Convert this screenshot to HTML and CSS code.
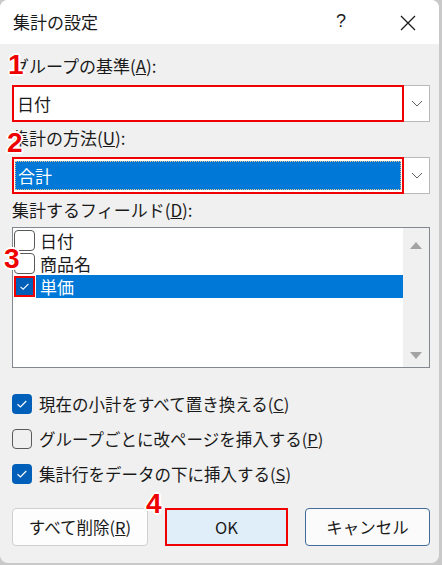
FILE: index.html
```html
<!DOCTYPE html>
<html lang="ja">
<head>
    <meta charset="UTF-8">
    <meta name="viewport" content="width=device-width, initial-scale=1.0">
    <title>集計の設定</title>
    <link rel="stylesheet" href="styles.css">
</head>
<body>
    <div class="dialog">
        <div class="titlebar">
            <span class="title">集計の設定</span>
            <span class="help">?</span>
            <span class="close">
                <svg width="16" height="16" viewBox="0 0 16 16"><path d="M1 1 L15 15 M15 1 L1 15" stroke="#1a1a1a" stroke-width="1.3" fill="none"/></svg>
            </span>
        </div>

        <div class="content">
            <div class="label first">グループの基準(<u>A</u>):</div>
            <div class="combo">
                <div class="field mark">日付</div>
                <div class="drop">
                    <svg width="12" height="7" viewBox="0 0 12 7"><path d="M1 1 L6 6 L11 1" stroke="#606060" stroke-width="1" fill="none"/></svg>
                </div>
            </div>

            <div class="label">集計の方法(<u>U</u>):</div>
            <div class="combo">
                <div class="field mark"><div class="sel">合計</div></div>
                <div class="drop">
                    <svg width="12" height="7" viewBox="0 0 12 7"><path d="M1 1 L6 6 L11 1" stroke="#606060" stroke-width="1" fill="none"/></svg>
                </div>
            </div>

            <div class="label">集計するフィールド(<u>D</u>):</div>
            <div class="listbox">
                <div class="items">
                    <div class="item"><span class="box"></span><span class="text">日付</span></div>
                    <div class="item"><span class="box"></span><span class="text">商品名</span></div>
                    <div class="item selected">
                        <span class="box checked mark">
                            <svg width="17" height="17" viewBox="0 0 17 17"><path d="M4.5 8.8 L7.2 11.2 L12.5 5.8" stroke="#fff" stroke-width="1.1" fill="none"/></svg>
                        </span>
                        <span class="text">単価</span>
                    </div>
                </div>
                <div class="scroll">
                    <svg width="12" height="7" viewBox="0 0 12 7"><path d="M0 7 L6 0 L12 7 Z" fill="#a3a3a3"/></svg>
                    <svg width="12" height="7" viewBox="0 0 12 7"><path d="M0 0 L12 0 L6 7 Z" fill="#a3a3a3"/></svg>
                </div>
            </div>

            <div class="options">
                <div class="opt">
                    <span class="cb on"><svg width="20" height="20" viewBox="0 0 20 20"><path d="M5.5 10.3 L8.4 13 L14.3 7" stroke="#fff" stroke-width="1.2" fill="none"/></svg></span>
                    現在の小計をすべて置き換える(<u>C</u>)
                </div>
                <div class="opt">
                    <span class="cb"></span>
                    グループごとに改ページを挿入する(<u>P</u>)
                </div>
                <div class="opt">
                    <span class="cb on"><svg width="20" height="20" viewBox="0 0 20 20"><path d="M5.5 10.3 L8.4 13 L14.3 7" stroke="#fff" stroke-width="1.2" fill="none"/></svg></span>
                    集計行をデータの下に挿入する(<u>S</u>)
                </div>
            </div>

            <div class="buttons">
                <button class="btn btn-clear">すべて削除(<u>R</u>)</button>
                <button class="btn btn-ok">OK</button>
                <button class="btn btn-cancel">キャンセル</button>
            </div>
        </div>

        <!-- step numbers -->
        <span class="num n1">1</span>
        <span class="num n2">2</span>
        <span class="num n3">3</span>
        <span class="num n4">4</span>
    </div>
</body>
</html>
```

FILE: styles.css
```css
body {
    margin: 0;
    background-color: #c9c9c9;
    font-family: "Noto Sans CJK JP", "Noto Sans", sans-serif;
    color: #1a1a1a;
}

.dialog {
    position: relative;
    width: 439px;
    height: 563px;
    background: #f0f0f0;
    border-radius: 8px;
    overflow: hidden;
}

.titlebar {
    height: 44px;
    background: white;
    display: flex;
    align-items: center;
    padding-left: 13px;
}
.title {
    font-size: 17px;
    line-height: 44px;
    flex: 1;
}
.help {
    font-family: "Liberation Sans", sans-serif;
    font-size: 18px;
    width: 64px;
    margin-top: -2px;
}
.close {
    width: 39px;
    display: flex;
    margin-top: 1px;
}

.content {
    padding: 10px 9px 0 12px;
}

.label {
    font-size: 17px;
    line-height: 24px;
    height: 24px;
    margin-top: 4px;
}
.label.first {
    margin-top: 0;
}

.combo {
    display: flex;
    height: 37px;
    margin-top: 7px;
}
.combo .field {
    flex: 1;
    background: white;
    font-size: 17px;
    line-height: 33px;
    padding-left: 3px;
    display: flex;
}
.combo .drop {
    width: 26px;
    background: white;
    border: 1px solid #b9b9b9;
    border-left: none;
    box-sizing: border-box;
    display: flex;
    align-items: center;
    justify-content: center;
}
.mark {
    border: 2px solid #f00000;
}
.combo .sel {
    flex: 1;
    margin: 2px 1px 2px -2px;
    padding-left: 2px;
    background: #0078d7;
    color: white;
    line-height: 27px;
    border: 1px dotted #e7c08e;
}

.listbox {
    margin-top: 5px;
    height: 141px;
    box-sizing: border-box;
    border: 1px solid #828790;
    background: white;
    display: flex;
}
.items {
    flex: 1;
    padding-top: 1px;
}
.item {
    display: flex;
    height: 23px;
    font-size: 17px;
    line-height: 23px;
}
.item .box {
    width: 21px;
    height: 21px;
    box-sizing: border-box;
    margin: 1px 1px 0 1px;
    border: 1px solid #5a5a5a;
    border-radius: 4px;
    background: white;
}
.item .box.checked {
    border: 2px solid #f00000;
    border-radius: 0;
    background: #005fb8;
    display: flex;
    align-items: center;
    justify-content: center;
}
.item .text {
    flex: 1;
    padding-left: 4px;
}
.item.selected .text {
    background: #0078d7;
    color: white;
}
.scroll {
    width: 26px;
    background: #f0f0f0;
    display: flex;
    flex-direction: column;
    justify-content: space-between;
    align-items: center;
    padding: 14px 0 8px;
}

.options {
    margin-top: 18px;
}
.opt {
    display: flex;
    align-items: center;
    height: 35px;
    font-size: 16.5px;
}
.cb {
    width: 20px;
    height: 20px;
    box-sizing: border-box;
    border: 1px solid #5a5a5a;
    border-radius: 4px;
    margin-right: 7px;
    display: flex;
}
.cb.on {
    border: none;
    background: #005fb8;
}

.buttons {
    display: flex;
    gap: 17px;
    margin-top: 17px;
}
.btn {
    height: 38px;
    font-family: "Noto Sans CJK JP", "Noto Sans", sans-serif;
    font-size: 16.5px;
    color: #1a1a1a;
    background: #fdfdfd;
    border: 1px solid #d0d0d0;
    border-radius: 4px;
    padding: 0;
}
.btn-clear {
    width: 136px;
}
.btn-ok {
    width: 123px;
    background: #e0eefa;
    border: 2px solid #f00000;
    border-radius: 0;
}
.btn-cancel {
    width: 125px;
    background: #fbfbfb;
    border-color: #3f6c98;
}

.num {
    position: absolute;
    font-family: "Liberation Sans", sans-serif;
    font-weight: bold;
    font-size: 28px;
    line-height: 28px;
    color: #ee0000;
    text-shadow: 2px 0 #fff, -2px 0 #fff, 0 2px #fff, 0 -2px #fff,
        1px 1px #fff, -1px -1px #fff, 1px -1px #fff, -1px 1px #fff;
}
.n1 { left: 8px; top: 51px; }
.n2 { left: 7px; top: 129px; }
.n3 { left: 4px; top: 245px; }
.n4 { left: 146px; top: 490px; }
```
